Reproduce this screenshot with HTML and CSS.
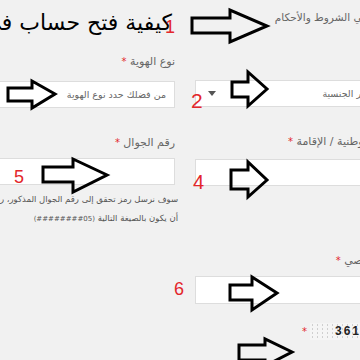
FILE: index.html
```html
<!DOCTYPE html>
<html lang="ar" dir="rtl">

<head>
    <meta charset="UTF-8">
    <meta name="viewport" content="width=device-width, initial-scale=1.0">
    <title>كيفية فتح حساب في أبشر</title>
    <link rel="stylesheet" href="styles.css">
</head>

<body>
    <div class="formulaire">
        <div class="colonne colonne-droite">
            <p class="conditions">أوافق علي الشروط والأحكام</p>
            <div class="faux-select">
                <span class="faux-select-texte">اختر الجنسية</span>
                <span class="faux-select-fleche"></span>
            </div>
            <label class="etiquette etiquette-haute">الهوية الوطنية / الإقامة <span class="etoile">*</span></label>
            <input type="text" class="champ">
            <label class="etiquette etiquette-basse">رمز شخصي <span class="etoile">*</span></label>
            <input type="text" class="champ champ-haut">
            <div class="captcha-ligne">
                <span class="captcha">36172</span>
                <span class="etoile">*</span>
            </div>
        </div>

        <div class="colonne colonne-gauche">
            <h1 class="titre">كيفية فتح حساب في أبشر</h1>
            <label class="etiquette etiquette-premiere">نوع الهوية <span class="etoile">*</span></label>
            <input type="text" class="champ champ-premier" placeholder="من فضلك حدد نوع الهوية">
            <label class="etiquette etiquette-haute">رقم الجوال <span class="etoile">*</span></label>
            <input type="text" class="champ">
            <p class="aide">سوف نرسل رمز تحقق إلى رقم الجوال المذكور، رقم الجوال يجب<br>أن يكون بالصيغة التالية <span class="format">(05########)</span></p>
        </div>
    </div>

    <!-- annotations : flèches et numéros par-dessus le formulaire -->
    <svg class="fleches" width="360" height="360" viewBox="0 0 360 360">
        <path d="M192 18 H230 V10 L267 26 L230 42 V33 H192 Z" />
        <path d="M8 88 H32 V81 L55 94 L32 108 V101 H8 Z" />
        <path d="M232 82 H248 V72 L267 89 L248 106 V97 H232 Z" />
        <path d="M43 167 H73 V159 L107 175 L73 192 V182 H43 Z" />
        <path d="M231 170 H248 V162 L267 180 L248 197 V189 H231 Z" />
        <path d="M230 285 H252 V277 L277 293 L252 310 V300 H230 Z" />
        <path d="M239 345 H265 V339 L292 352 L265 366 V360 H239 Z" />
    </svg>
    <span class="numero numero-1">1</span>
    <span class="numero numero-2">2</span>
    <span class="numero numero-4">4</span>
    <span class="numero numero-5">5</span>
    <span class="numero numero-6">6</span>
</body>

</html>
```

FILE: styles.css
```css
html,
body {
    margin: 0;
    padding: 0;
    overflow: hidden;
}

body {
    position: relative;
    height: 360px;
    background-color: #f1f1f1;
    font-family: "DejaVu Sans", sans-serif;
    color: #666;
}

.formulaire {
    display: grid;
    grid-template-columns: 205px 260px;
    column-gap: 20px;
    width: 485px;
    margin-right: -40px;
    align-items: start;
}

.colonne {
    display: flex;
    flex-direction: column;
    min-width: 0;
}

.conditions {
    margin: 7px 0 0;
    font-size: 10.5px;
    line-height: 20px;
    white-space: nowrap;
}

.titre {
    margin: 0;
    padding-right: 3px;
    height: 46px;
    font-size: 22px;
    font-weight: normal;
    line-height: 46px;
    color: #000;
    white-space: nowrap;
}

.etiquette {
    display: block;
    font-size: 11px;
    line-height: 20px;
    white-space: nowrap;
}

.etiquette-premiere {
    margin-top: 6px;
}

.etiquette-haute {
    margin-top: 25px;
}

.etiquette-basse {
    margin-top: 65px;
}

.etoile {
    color: #e3262b;
    font-size: 10px;
}

.champ,
.faux-select {
    display: block;
    box-sizing: border-box;
    width: 100%;
    height: 27px;
    margin: 7px 0 0;
    padding: 0 8px;
    border: 1px solid #dddddd;
    background-color: #fff;
    font-family: "DejaVu Sans", sans-serif;
    font-size: 9.5px;
    color: #666;
    outline: none;
}

.champ::placeholder {
    color: #666;
}

.champ-premier {
    margin-top: 9px;
}

.colonne-gauche .champ:not(.champ-premier) {
    margin-top: 5px;
}

.champ-haut {
    height: 28px;
    margin-top: 5px;
}

.faux-select {
    display: flex;
    align-items: center;
    justify-content: space-between;
    margin-top: 53px;
    padding: 0 26px 0 12px;
}

.faux-select-fleche {
    width: 0;
    height: 0;
    border-left: 4px solid transparent;
    border-right: 4px solid transparent;
    border-top: 5px solid #555;
}

.aide {
    margin: 5px -3px 0 0;
    font-size: 8.5px;
    line-height: 19px;
    color: #555;
    white-space: nowrap;
}

.format {
    font-size: 7px;
}

.captcha-ligne {
    display: flex;
    align-items: center;
    gap: 3px;
    margin-top: 19px;
}

.captcha {
    box-sizing: border-box;
    width: 90px;
    height: 17px;
    padding-left: 25px;
    direction: ltr;
    background-color: #f5f5f5;
    background-image: radial-gradient(#b5b5b5 0.5px, transparent 0.8px);
    background-size: 5px 4px;
    font-family: "Liberation Sans", sans-serif;
    font-size: 12px;
    font-weight: bold;
    line-height: 17px;
    letter-spacing: 2px;
    color: #222;
}

.fleches {
    position: absolute;
    top: 0;
    left: 0;
    fill: none;
    stroke: #000;
    stroke-width: 3;
    stroke-linejoin: miter;
}

.numero {
    position: absolute;
    font-family: "Liberation Sans", sans-serif;
    line-height: 1;
    color: #e3262b;
    direction: ltr;
}

.numero-1 {
    left: 165px;
    top: 18px;
    font-size: 18px;
}

.numero-2 {
    left: 191px;
    top: 90px;
    font-size: 21px;
}

.numero-4 {
    left: 193px;
    top: 172px;
    font-size: 20px;
}

.numero-5 {
    left: 14px;
    top: 168px;
    font-size: 18px;
}

.numero-6 {
    left: 174px;
    top: 280px;
    font-size: 18px;
}
```
